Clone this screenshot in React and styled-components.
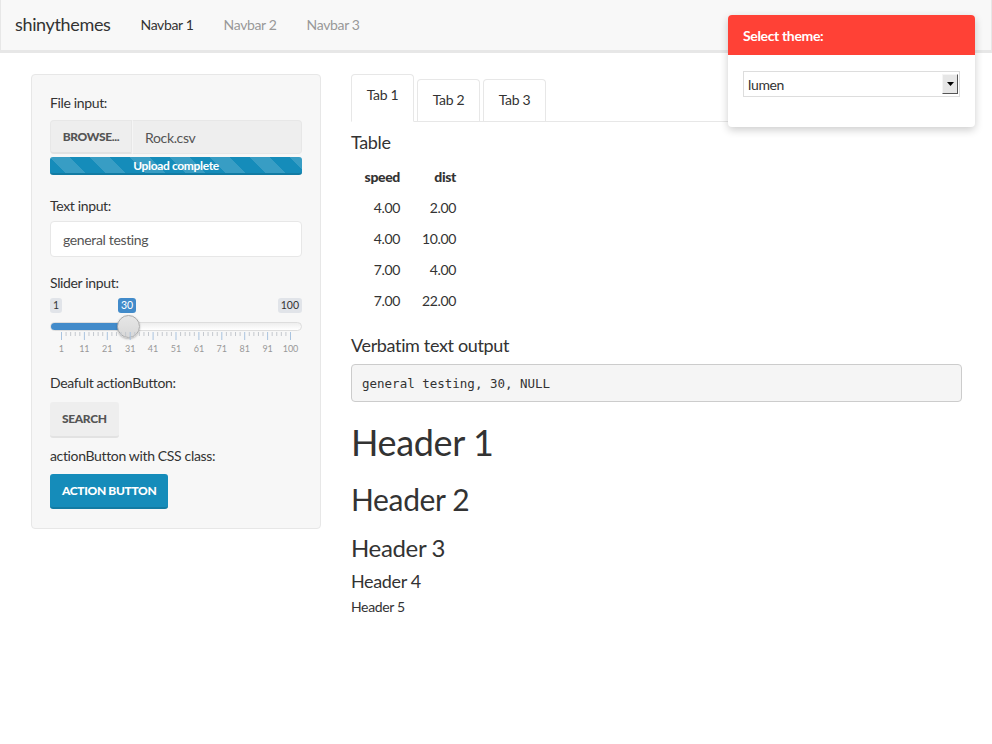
import React from "react";
import styled, { createGlobalStyle } from "styled-components";

const Global = createGlobalStyle`
  html, body { margin: 0; padding: 0; background: #fff; }
  body {
    font-family: Lato, "Open Sans", sans-serif;
    font-size: 14px;
    letter-spacing: -0.025em;
    color: #333;
  }
  * { box-sizing: border-box; }
`;

const Page = styled.div`
  position: relative;
  width: 992px;
  min-height: 744px;
`;

const Navbar = styled.nav`
  height: 53px;
  background: #f8f8f8;
  border: 1px solid #e7e7e7;
  border-top: 0;
  border-bottom: 3px solid #e7e7e7;
  display: flex;
  align-items: center;
  padding-left: 14px;
`;

const Brand = styled.div`
  font-size: 18px;
  color: #333;
  margin-right: 15px;
  margin-top: -2px;
`;

const NavItem = styled.div`
  padding: 0 15px;
  font-size: 14px;
  color: ${(p) => (p.$active ? "#333" : "#999")};
  margin-top: -2px;
`;

const Body = styled.div`
  display: flex;
  padding: 21px 0 0 31px;
  gap: 30px;
`;

const Well = styled.div`
  width: 290px;
  height: 455px;
  background: #f7f7f7;
  border: 1px solid #e7e7e7;
  border-radius: 4px;
  padding: 18px 18px 19px;
  display: flex;
  flex-direction: column;
`;

const Label = styled.div`
  font-size: 14px;
  line-height: 20px;
  color: #333;
  margin-top: ${(p) => p.$mt || 0}px;
  margin-bottom: ${(p) => p.$mb || 5}px;
`;

const FileRow = styled.div`
  display: flex;
  height: 35px;
`;

const BrowseBtn = styled.div`
  width: 82px;
  background: #eee;
  border: 1px solid #e7e7e7;
  border-bottom: 2px solid #e2e2e2;
  border-radius: 4px 0 0 4px;
  display: flex;
  align-items: center;
  justify-content: center;
  font-size: 12px;
  font-weight: 900;
  color: #555;
`;

const FileName = styled.div`
  flex: 1;
  background: #eee;
  border: 1px solid #e7e7e7;
  border-left: 1px solid #f5f5f5;
  border-radius: 0 4px 4px 0;
  display: flex;
  align-items: center;
  padding-left: 12px;
  font-size: 14px;
  color: #555;
`;

const Progress = styled.div`
  margin-top: 3px;
  height: 18px;
  border-radius: 3px;
  background-color: #158cba;
  background-image: linear-gradient(
    45deg,
    rgba(255, 255, 255, 0.15) 25%,
    transparent 25%,
    transparent 50%,
    rgba(255, 255, 255, 0.15) 50%,
    rgba(255, 255, 255, 0.15) 75%,
    transparent 75%,
    transparent
  );
  background-size: 40px 40px;
  border-bottom: 2px solid #127ba3;
  color: #fff;
  font-size: 12px;
  font-weight: 700;
  display: flex;
  align-items: center;
  justify-content: center;
`;

const TextInput = styled.div`
  height: 37px;
  background: #fff;
  border: 1px solid #e7e7e7;
  border-radius: 4px;
  display: flex;
  align-items: center;
  padding-left: 12px;
  font-size: 14px;
  color: #555;
`;

const Slider = styled.div`
  position: relative;
  height: 63px;
`;

const SliderTag = styled.span`
  position: absolute;
  top: 0;
  height: 15px;
  line-height: 15px;
  padding: 0 3px;
  font-size: 10.5px;
  letter-spacing: 0;
  border-radius: 3px;
  background: ${(p) => (p.$accent ? "#428bca" : "#e1e4e9")};
  color: ${(p) => (p.$accent ? "#fff" : "#333")};
`;

const Track = styled.div`
  position: absolute;
  left: 0;
  right: 0;
  top: 24px;
  height: 9px;
  border-radius: 5px;
  border: 1px solid #ddd;
  background: linear-gradient(#eee, #fff);
  overflow: hidden;
`;

const Fill = styled.div`
  height: 100%;
  background: #428bca;
`;

const Handle = styled.div`
  position: absolute;
  top: 17px;
  width: 23px;
  height: 23px;
  border-radius: 50%;
  background: linear-gradient(#e6e6e6, #d8d8d8);
  border: 1px solid #aaa;
  box-shadow: 0 1px 2px rgba(0, 0, 0, 0.25);
`;

const Ticks = styled.svg`
  position: absolute;
  left: 0;
  top: 34px;
`;

const TickLabels = styled.div`
  position: absolute;
  left: 0;
  right: 0;
  top: 45px;
  display: flex;
`;

const TickLabel = styled.span`
  flex: 1;
  text-align: center;
  font-size: 9px;
  letter-spacing: 0;
  color: #999;
`;

const Btn = styled.div`
  align-self: flex-start;
  height: 36px;
  padding: 0 12px;
  border-radius: 3px;
  display: flex;
  align-items: center;
  font-size: 12px;
  font-weight: 900;
  text-transform: uppercase;
  background: ${(p) => (p.$primary ? "#158cba" : "#eee")};
  color: ${(p) => (p.$primary ? "#fff" : "#555")};
  border-bottom: 2px solid ${(p) => (p.$primary ? "#127ba3" : "#e2e2e2")};
`;

const Main = styled.div`
  width: 611px;
  display: flex;
  flex-direction: column;
`;

const TabBar = styled.div`
  display: flex;
  align-items: flex-end;
  gap: 3px;
  height: 48px;
  border-bottom: 1px solid #e7e7e7;
`;

const Tab = styled.div`
  width: 63px;
  height: ${(p) => (p.$active ? 48 : 42)}px;
  margin-bottom: ${(p) => (p.$active ? -1 : 0)}px;
  background: #fff;
  border: 1px solid #e7e7e7;
  border-bottom: ${(p) => (p.$active ? "1px solid #fff" : "0")};
  border-radius: 4px 4px 0 0;
  display: flex;
  justify-content: center;
  padding-top: 11px;
  font-size: 14px;
  color: #333;
`;

const Heading = styled.div`
  font-size: ${(p) => p.$size}px;
  line-height: ${(p) => p.$lh}px;
  margin-top: ${(p) => p.$mt}px;
  color: #333;
  font-weight: 400;
`;

const Table = styled.table`
  align-self: flex-start;
  border-collapse: collapse;
  margin-top: 8px;
`;

const Th = styled.th`
  font-weight: 900;
  text-align: right;
  padding: 0 6px 0 0;
  height: 32px;
  width: ${(p) => p.$w}px;
  font-size: 14px;
`;

const Td = styled.td`
  text-align: right;
  padding: 0 6px 0 0;
  height: 31px;
  font-size: 14px;
`;

const Pre = styled.pre`
  margin: 9px 0 0;
  height: 38px;
  background: #f5f5f5;
  border: 1px solid #ccc;
  border-radius: 4px;
  padding: 0 10px;
  display: flex;
  align-items: center;
  font-family: "DejaVu Sans Mono", "Liberation Mono", monospace;
  font-size: 12.5px;
  letter-spacing: 0;
  color: #333;
`;

const Popover = styled.div`
  position: absolute;
  left: 728px;
  top: 15px;
  width: 247px;
  height: 112px;
  background: #fff;
  border-radius: 4px;
  box-shadow: 0 3px 8px rgba(0, 0, 0, 0.2);
  overflow: hidden;
`;

const PopHeader = styled.div`
  height: 40px;
  background: #ff4136;
  color: #fff;
  font-weight: 700;
  font-size: 14px;
  display: flex;
  align-items: center;
  padding-left: 15px;
`;

const PopBody = styled.div`
  padding: 16px 15px;
`;

const Select = styled.div`
  height: 26px;
  border: 1px solid #ddd;
  background: #fff;
  display: flex;
  align-items: center;
  padding: 0 1px 0 4px;
  font-size: 14px;
  color: #333;
`;

const SelectText = styled.span`
  flex: 1;
`;

const SelectArrow = styled.div`
  width: 16px;
  height: 20px;
  background: #e6e6e6;
  border: 1px solid;
  border-color: #f5f5f5 #555 #555 #f5f5f5;
  display: flex;
  align-items: center;
  justify-content: center;
`;

const rows = [
  ["4.00", "2.00"],
  ["4.00", "10.00"],
  ["7.00", "4.00"],
  ["7.00", "22.00"],
];

function TickSvg() {
  const major = [];
  const minor = [];
  const step = 229 / 10;
  for (let i = 0; i <= 10; i++) {
    const x = 11.5 + i * step;
    major.push(<line key={"M" + i} x1={x} x2={x} y1={0} y2={8} />);
    if (i < 10) {
      for (let k = 1; k <= 4; k++) {
        const xm = x + (k * step) / 5;
        minor.push(<line key={"m" + i + k} x1={xm} x2={xm} y1={0} y2={4} />);
      }
    }
  }
  return (
    <Ticks width="250" height="9">
      <g stroke="#a9c3df" strokeWidth="1">{major}</g>
      <g stroke="#c4c8ce" strokeWidth="1">{minor}</g>
    </Ticks>
  );
}

export default function App() {
  const labels = [1, 11, 21, 31, 41, 51, 61, 71, 81, 91, 100];
  return (
    <Page>
      <Global />
      <Navbar>
        <Brand>shinythemes</Brand>
        <NavItem $active>Navbar 1</NavItem>
        <NavItem>Navbar 2</NavItem>
        <NavItem>Navbar 3</NavItem>
      </Navbar>
      <Body>
        <Well>
          <Label $mb={7}>File input:</Label>
          <FileRow>
            <BrowseBtn>BROWSE...</BrowseBtn>
            <FileName>Rock.csv</FileName>
          </FileRow>
          <Progress>Upload complete</Progress>
          <Label $mt={21}>Text input:</Label>
          <TextInput>general testing</TextInput>
          <Label $mt={16}>Slider input:</Label>
          <Slider>
            <SliderTag style={{ left: 0 }}>1</SliderTag>
            <SliderTag $accent style={{ left: 68 }}>30</SliderTag>
            <SliderTag style={{ right: 0 }}>100</SliderTag>
            <Track>
              <Fill style={{ width: 78 }} />
            </Track>
            <Handle style={{ left: 67 }} />
            <TickSvg />
            <TickLabels>
              {labels.map((l) => (
                <TickLabel key={l}>{l}</TickLabel>
              ))}
            </TickLabels>
          </Slider>
          <Label $mt={13} $mb={9}>Deafult actionButton:</Label>
          <Btn>Search</Btn>
          <Label $mt={8} $mb={8}>actionButton with CSS class:</Label>
          <Btn $primary>Action Button</Btn>
        </Well>
        <Main>
          <TabBar>
            <Tab $active>Tab 1</Tab>
            <Tab>Tab 2</Tab>
            <Tab>Tab 3</Tab>
          </TabBar>
          <Heading $size={18} $lh={20} $mt={10}>Table</Heading>
          <Table>
            <thead>
              <tr>
                <Th $w={55}>speed</Th>
                <Th $w={56}>dist</Th>
              </tr>
            </thead>
            <tbody>
              {rows.map((r, i) => (
                <tr key={i}>
                  <Td>{r[0]}</Td>
                  <Td>{r[1]}</Td>
                </tr>
              ))}
            </tbody>
          </Table>
          <Heading $size={18} $lh={20} $mt={19}>Verbatim text output</Heading>
          <Pre>general testing, 30, NULL</Pre>
          <Heading $size={36} $lh={40} $mt={20}>Header 1</Heading>
          <Heading $size={30} $lh={34} $mt={20}>Header 2</Heading>
          <Heading $size={24} $lh={28} $mt={18}>Header 3</Heading>
          <Heading $size={18} $lh={22} $mt={8}>Header 4</Heading>
          <Heading $size={14} $lh={18} $mt={6}>Header 5</Heading>
        </Main>
      </Body>
      <Popover>
        <PopHeader>Select theme:</PopHeader>
        <PopBody>
          <Select>
            <SelectText>lumen</SelectText>
            <SelectArrow>
              <svg width="7" height="4" viewBox="0 0 7 4">
                <path d="M0 0h7L3.5 4z" fill="#000" />
              </svg>
            </SelectArrow>
          </Select>
        </PopBody>
      </Popover>
    </Page>
  );
}
